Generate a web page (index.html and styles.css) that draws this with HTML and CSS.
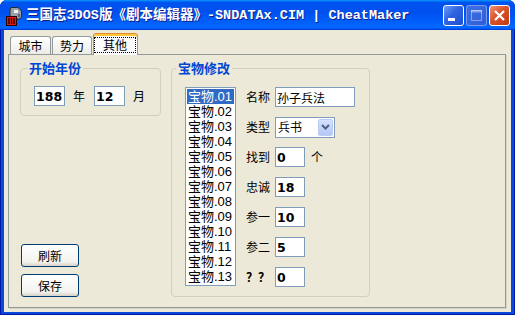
FILE: index.html
```html
<!DOCTYPE html>
<html>
<head>
    <title>三国志3DOS版《剧本编辑器》-SNDATAx.CIM | CheatMaker</title>
    <meta name="viewport" content="width=device-width, initial-scale=1.0">
    <link rel="stylesheet" href="styles.css">
</head>
<body>
    <div class="window">
        <div class="titlebar">
            <svg class="app-icon" width="18" height="20" viewBox="0 0 18 20">
                <path d="M6 1.5h7l3.5 3.5v6l-2 2h-7.5l-2-3v-6z" fill="#9aa0a8" stroke="#2b2b2b"/>
                <path d="M9 4h4v3h-4z" fill="#eef0f2"/>
                <path d="M13 8h2v3h-2z" fill="#5c626a"/>
                <rect x="1.5" y="10.5" width="10" height="9" fill="#d81c10" stroke="#2b0000"/>
                <path d="M4 12v6M6.5 12v6M9 12v6" stroke="#1a0000" stroke-width="1.2"/>
            </svg>
            <span class="title">三国志3DOS版《剧本编辑器》-SNDATAx.CIM | CheatMaker</span>
            <div class="caption-buttons">
                <span class="cap-btn cap-min">
                    <svg width="19" height="19" viewBox="0 0 19 19"><rect x="4" y="12" width="7" height="3" fill="#fff"/></svg>
                </span>
                <span class="cap-btn cap-max">
                    <svg width="19" height="19" viewBox="0 0 19 19"><path d="M4.5 4.5h10v10h-10z" fill="none" stroke="rgba(255,255,255,0.4)" stroke-width="1"/><rect x="4" y="4" width="11" height="2.5" fill="rgba(255,255,255,0.4)"/></svg>
                </span>
                <span class="cap-btn cap-close">
                    <svg width="19" height="19" viewBox="0 0 19 19"><path d="M5 5l9 9M14 5l-9 9" stroke="#fff" stroke-width="2.2"/></svg>
                </span>
            </div>
        </div>

        <div class="client">
            <div class="tabs">
                <span class="tab">城市</span>
                <span class="tab tab-narrow">势力</span>
                <span class="tab active"><span class="focus">其他</span></span>
            </div>

            <div class="panel">
                <div class="left-col">
                    <fieldset class="group year-group">
                        <legend>开始年份</legend>
                        <div class="year-row">
                            <input class="field num year-field" value="188">
                            <span class="unit">年</span>
                            <input class="field num year-field" value="12">
                            <span class="unit">月</span>
                        </div>
                    </fieldset>

                    <div class="actions">
                        <button class="btn">刷新</button>
                        <button class="btn">保存</button>
                    </div>
                </div>

                <fieldset class="group item-group">
                    <legend>宝物修改</legend>
                    <div class="item-body">
                        <ul class="listbox">
                            <li class="selected">宝物.01</li>
                            <li>宝物.02</li>
                            <li>宝物.03</li>
                            <li>宝物.04</li>
                            <li>宝物.05</li>
                            <li>宝物.06</li>
                            <li>宝物.07</li>
                            <li>宝物.08</li>
                            <li>宝物.09</li>
                            <li>宝物.10</li>
                            <li>宝物.11</li>
                            <li>宝物.12</li>
                            <li>宝物.13</li>
                        </ul>

                        <div class="form-grid">
                            <label>名称</label>
                            <input class="field name-field" value="孙子兵法">

                            <label>类型</label>
                            <div class="combo">
                                <span class="combo-text">兵书</span>
                                <span class="combo-drop">
                                    <svg width="9" height="6" viewBox="0 0 9 6"><path d="M1 1l3.5 3.5L8 1" fill="none" stroke="#4d6185" stroke-width="2"/></svg>
                                </span>
                            </div>

                            <label>找到</label>
                            <div class="with-unit">
                                <input class="field num small-field" value="0">
                                <span class="unit-after">个</span>
                            </div>

                            <label>忠诚</label>
                            <input class="field num small-field" value="18">

                            <label>参一</label>
                            <input class="field num small-field" value="10">

                            <label>参二</label>
                            <input class="field num small-field" value="5">

                            <label class="bold-label">？？</label>
                            <input class="field num small-field" value="0">
                        </div>
                    </div>
                </fieldset>
            </div>
        </div>
    </div>
</body>
</html>
```

FILE: styles.css
```css
* { box-sizing: border-box; }

body {
    margin: 0;
    background: #fff;
    font-family: "Noto Sans CJK SC", sans-serif;
    font-size: 12px;
    color: #000;
}

.window {
    width: 515px;
    height: 315px;
    display: flex;
    flex-direction: column;
    background: #0a48dc;
    border-radius: 7px 7px 0 0;
    box-shadow: inset 0 0 0 1px #0019a6;
    overflow: hidden;
}

/* title bar */
.titlebar {
    height: 30px;
    flex: none;
    display: flex;
    align-items: center;
    padding: 1px 5px 0 5px;
    background: linear-gradient(180deg, #0997ff, #0053ee 8%, #0050ee 40%, #0066ff 88%, #0066ff 93%, #005bff 95%, #003dd7 96%, #003dd7);
}
.app-icon { flex: none; }
.title {
    margin-left: 3px;
    color: #fff;
    font-family: "Liberation Mono", "Noto Sans CJK SC", monospace;
    font-weight: bold;
    font-size: 13.5px;
    line-height: 16px;
    white-space: nowrap;
    text-shadow: 1px 1px 0 #0f1c8a;
}
.caption-buttons {
    margin-left: auto;
    align-self: flex-start;
    margin-top: 4px;
    display: flex;
    gap: 2px;
}
.cap-btn {
    width: 21px;
    height: 21px;
    border: 1px solid #fff;
    border-radius: 3px;
    display: flex;
}
.cap-min { background: linear-gradient(135deg, #6a9cfb 0%, #2f63e0 45%, #1c4fcf 100%); }
.cap-max {
    border-color: rgba(255,255,255,0.35);
    background: linear-gradient(135deg, #3f70e6 0%, #2d5ed8 100%);
}
.cap-close { background: linear-gradient(135deg, #ef9272 0%, #d9532a 45%, #c23a12 100%); }

/* client area */
.client {
    flex: 1;
    margin: 0 4px 4px;
    background: #ece9d8;
    padding-top: 3px;
    display: flex;
    flex-direction: column;
}

.tabs {
    display: flex;
    align-items: flex-end;
    height: 21px;
    padding-left: 6px;
}
.tab {
    width: 41px;
    height: 18px;
    margin-right: 1px;
    border: 1px solid #919b9c;
    border-bottom: 0;
    border-radius: 3px 3px 0 0;
    background: linear-gradient(#ffffff, #ecebe6);
    text-align: center;
    line-height: 17px;
}
.tab-narrow { width: 40px; }
.tab.active {
    width: 45px;
    height: 22px;
    margin-bottom: -1px;
    position: relative;
    z-index: 1;
    background: #fcfcfe;
    border-top-color: #e68b2c;
    box-shadow: inset 0 2px 0 #ffc83c;
}
.focus {
    display: block;
    width: 42px;
    height: 16px;
    margin-top: 3px;
    border: 1px dotted #000;
    line-height: 14px;
}

.panel {
    flex: 1;
    margin: 0 5px 4px 4px;
    border: 1px solid #919b9c;
    box-shadow: 1px 1px 0 #d6d3c6;
    background: #ece9d8;
    display: flex;
    gap: 10px;
    padding: 6px 0 10px 11px;
}

/* group boxes */
.group {
    margin: 0;
    padding: 0;
    border: 1px solid #d0d0bf;
    border-radius: 4px;
    min-width: 0;
}
.group legend {
    padding: 0 2px;
    height: 14px;
    line-height: 14px;
    font-size: 13px;
    font-weight: bold;
    color: #0046d5;
}

.left-col {
    width: 141px;
    display: flex;
    flex-direction: column;
}
.year-group legend { margin-left: 6px; }
.year-row {
    display: flex;
    align-items: center;
    padding: 11px 0 9px 13px;
}
.unit { margin: 0 9px 0 8px; line-height: 14px; }

.actions {
    margin-top: auto;
    padding-left: 1px;
    display: flex;
    flex-direction: column;
    gap: 7px;
}
.btn {
    width: 58px;
    height: 23px;
    padding: 0;
    border: 1px solid #003c74;
    border-radius: 3px;
    background: linear-gradient(#ffffff, #f3f3ef 80%, #d8d2c6);
    font-family: inherit;
    font-size: 12px;
    line-height: 20px;
    color: #000;
}

.item-group { width: 199px; }
.item-group legend { margin-left: 4px; }
.item-body {
    display: flex;
    padding: 12px 0 9px 13px;
}

.listbox {
    margin: 0;
    padding: 1px;
    width: 51px;
    height: 199px;
    list-style: none;
    border: 1px solid #7f9db9;
    background: #fff;
    font-family: "Liberation Sans", "Noto Sans CJK SC", sans-serif;
    font-size: 13px;
}
.listbox li {
    height: 15px;
    line-height: 15px;
    padding-left: 1px;
    white-space: nowrap;
}
.listbox li.selected {
    background: #316ac5;
    color: #fff;
}

.form-grid {
    margin-left: 10px;
    display: grid;
    grid-template-columns: 29px auto;
    grid-auto-rows: 20px;
    row-gap: 10px;
    align-items: center;
    align-content: start;
}
.form-grid label { line-height: 14px; }
.bold-label { font-weight: bold; }

.field {
    height: 20px;
    border: 1px solid #7f9db9;
    background: #fff;
    padding: 0 1px;
    font-family: "Noto Sans CJK SC", sans-serif;
    font-size: 12px;
    color: #000;
    outline: none;
}
.num {
    font-family: "DejaVu Sans", sans-serif;
    font-weight: bold;
    font-size: 12.5px;
}
.year-field { width: 31px; }
.small-field { width: 30px; }
.name-field { width: 80px; }

.combo {
    width: 60px;
    height: 21px;
    border: 1px solid #7f9db9;
    background: #fff;
    display: flex;
    align-items: center;
}
.combo-text {
    padding-left: 2px;
    line-height: 14px;
}
.combo-drop {
    margin: 0 1px 0 auto;
    width: 15px;
    height: 17px;
    border: 1px solid #bccdf5;
    border-radius: 2px;
    background: linear-gradient(#d4e1fd, #b3c8f6);
    display: flex;
    align-items: center;
    justify-content: center;
}

.with-unit {
    display: flex;
    align-items: center;
}
.unit-after { margin-left: 6px; line-height: 14px; }
```
